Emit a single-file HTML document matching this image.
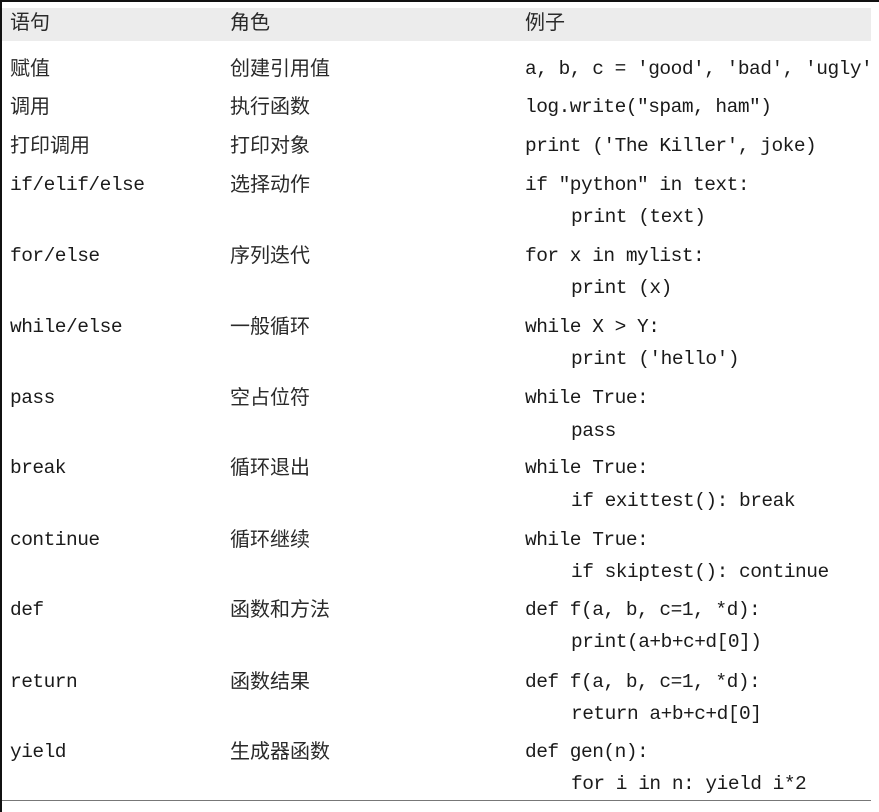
<!DOCTYPE html>
<html><head><meta charset="utf-8"><style>
body{margin:0;width:879px;height:812px;background:#fff;position:relative;overflow:hidden}
.t{position:absolute;height:32px;line-height:32px;white-space:pre;color:#1a1a1a}
.m{font-family:"Liberation Mono","DejaVu Sans Mono",monospace;font-size:19.5px;letter-spacing:-0.5px}
.c{font-family:"Liberation Sans","Noto Sans CJK SC",sans-serif;font-size:20px;color:#2a2a2a}
</style></head><body>
<div style="position:absolute;left:0;top:0;width:879px;height:2px;background:#111"></div>
<div style="position:absolute;left:0;top:0;width:2px;height:812px;background:#111"></div>
<div style="position:absolute;left:2px;top:8px;width:869px;height:33px;background:#ececec"></div>
<div style="position:absolute;left:2px;top:800px;width:869px;height:1px;background:#777"></div>

<div class="t c" style="left:10px;top:7px">语句</div>
<div class="t c" style="left:230px;top:7px">角色</div>
<div class="t c" style="left:525px;top:7px">例子</div>

<div class="t c" style="left:10px;top:53px">赋值</div>
<div class="t c" style="left:230px;top:53px">创建引用值</div>
<div class="t m" style="left:525px;top:53px">a, b, c = 'good', 'bad', 'ugly'</div>

<div class="t c" style="left:10px;top:91px">调用</div>
<div class="t c" style="left:230px;top:91px">执行函数</div>
<div class="t m" style="left:525px;top:91px">log.write("spam, ham")</div>

<div class="t c" style="left:10px;top:130px">打印调用</div>
<div class="t c" style="left:230px;top:130px">打印对象</div>
<div class="t m" style="left:525px;top:130px">print ('The Killer', joke)</div>

<div class="t m" style="left:10px;top:169px">if/elif/else</div>
<div class="t c" style="left:230px;top:169px">选择动作</div>
<div class="t m" style="left:525px;top:169px">if "python" in text:</div>
<div class="t m" style="left:571px;top:201px">print (text)</div>

<div class="t m" style="left:10px;top:240px">for/else</div>
<div class="t c" style="left:230px;top:240px">序列迭代</div>
<div class="t m" style="left:525px;top:240px">for x in mylist:</div>
<div class="t m" style="left:571px;top:272px">print (x)</div>

<div class="t m" style="left:10px;top:311px">while/else</div>
<div class="t c" style="left:230px;top:311px">一般循环</div>
<div class="t m" style="left:525px;top:311px">while X &gt; Y:</div>
<div class="t m" style="left:571px;top:343px">print ('hello')</div>

<div class="t m" style="left:10px;top:382px">pass</div>
<div class="t c" style="left:230px;top:382px">空占位符</div>
<div class="t m" style="left:525px;top:382px">while True:</div>
<div class="t m" style="left:571px;top:415px">pass</div>

<div class="t m" style="left:10px;top:452px">break</div>
<div class="t c" style="left:230px;top:452px">循环退出</div>
<div class="t m" style="left:525px;top:452px">while True:</div>
<div class="t m" style="left:571px;top:485px">if exittest(): break</div>

<div class="t m" style="left:10px;top:524px">continue</div>
<div class="t c" style="left:230px;top:524px">循环继续</div>
<div class="t m" style="left:525px;top:524px">while True:</div>
<div class="t m" style="left:571px;top:556px">if skiptest(): continue</div>

<div class="t m" style="left:10px;top:594px">def</div>
<div class="t c" style="left:230px;top:594px">函数和方法</div>
<div class="t m" style="left:525px;top:594px">def f(a, b, c=1, *d):</div>
<div class="t m" style="left:571px;top:626px">print(a+b+c+d[0])</div>

<div class="t m" style="left:10px;top:666px">return</div>
<div class="t c" style="left:230px;top:666px">函数结果</div>
<div class="t m" style="left:525px;top:666px">def f(a, b, c=1, *d):</div>
<div class="t m" style="left:571px;top:698px">return a+b+c+d[0]</div>

<div class="t m" style="left:10px;top:736px">yield</div>
<div class="t c" style="left:230px;top:736px">生成器函数</div>
<div class="t m" style="left:525px;top:736px">def gen(n):</div>
<div class="t m" style="left:571px;top:768px">for i in n: yield i*2</div>
</body></html>
